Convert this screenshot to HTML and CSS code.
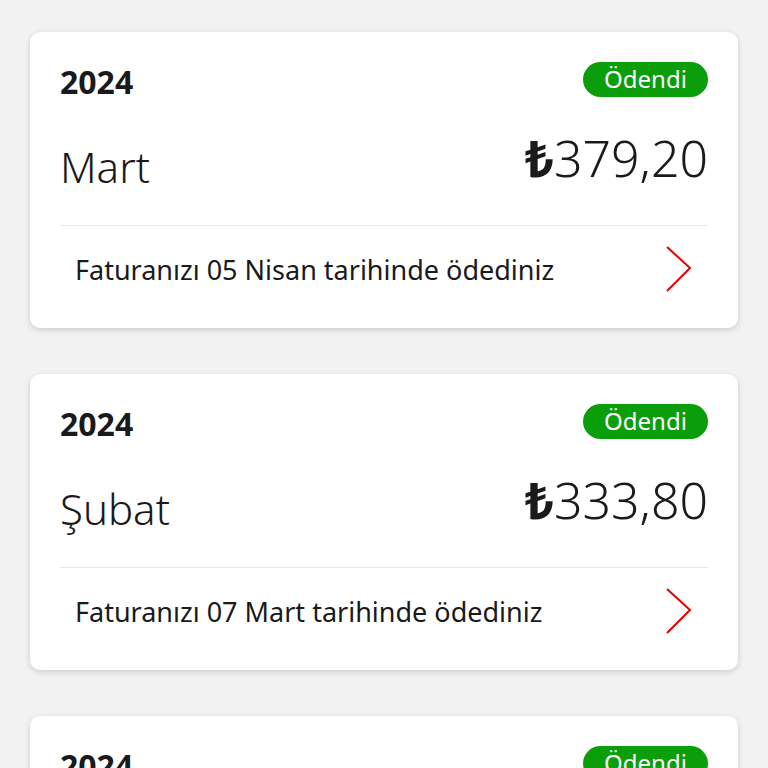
FILE: index.html
```html
<!DOCTYPE html>
<html lang="tr">
<head>
    <meta charset="UTF-8">
    <meta name="viewport" content="width=device-width, initial-scale=1.0">
    <title>Faturalarım</title>
    <link rel="stylesheet" href="styles.css">
</head>
<body>
    <div class="list">
        <!-- Mart faturası -->
        <div class="card">
            <div class="card-head">
                <span class="year">2024</span>
                <span class="badge">Ödendi</span>
            </div>
            <div class="card-main">
                <span class="month">Mart</span>
                <span class="amount"><b>₺</b>379,20</span>
            </div>
            <div class="card-foot">
                <span class="note">Faturanızı 05 Nisan tarihinde ödediniz</span>
                <svg class="chevron" width="26" height="46" viewBox="0 0 26 46">
                    <path d="M1 1 L24 22 L1 45" fill="none" stroke="#e60000" stroke-width="2"/>
                </svg>
            </div>
        </div>

        <!-- Şubat faturası -->
        <div class="card">
            <div class="card-head">
                <span class="year">2024</span>
                <span class="badge">Ödendi</span>
            </div>
            <div class="card-main">
                <span class="month">Şubat</span>
                <span class="amount"><b>₺</b>333,80</span>
            </div>
            <div class="card-foot">
                <span class="note">Faturanızı 07 Mart tarihinde ödediniz</span>
                <svg class="chevron" width="26" height="46" viewBox="0 0 26 46">
                    <path d="M1 1 L24 22 L1 45" fill="none" stroke="#e60000" stroke-width="2"/>
                </svg>
            </div>
        </div>

        <!-- Ocak faturası -->
        <div class="card">
            <div class="card-head">
                <span class="year">2024</span>
                <span class="badge">Ödendi</span>
            </div>
            <div class="card-main">
                <span class="month">Ocak</span>
                <span class="amount"><b>₺</b>301,40</span>
            </div>
            <div class="card-foot">
                <span class="note">Faturanızı 06 Şubat tarihinde ödediniz</span>
                <svg class="chevron" width="26" height="46" viewBox="0 0 26 46">
                    <path d="M1 1 L24 22 L1 45" fill="none" stroke="#e60000" stroke-width="2"/>
                </svg>
            </div>
        </div>
    </div>
</body>
</html>
```

FILE: styles.css
```css
body {
    margin: 0;
    background-color: #f2f2f2;
    font-family: "Noto Sans", Arial, sans-serif;
    color: #1a1a1a;
}
.list {
    padding: 32px 30px;
}
.card {
    background-color: #fff;
    border-radius: 10px;
    box-shadow: 0 2px 6px rgba(0, 0, 0, 0.16);
    margin-bottom: 46px;
    height: 296px;
    box-sizing: border-box;
}
.card-head {
    display: flex;
    justify-content: space-between;
    align-items: center;
    padding: 30px 30px 0;
    height: 35px;
    box-sizing: content-box;
}
.year {
    font-size: 32px;
    font-weight: 700;
    line-height: 35px;
    margin-top: 4px;
}
.badge {
    background-color: #0a9e0a;
    color: #fff;
    border-radius: 18px;
    height: 35px;
    width: 125px;
    text-align: center;
    font-size: 24px;
    line-height: 33px;
    box-sizing: border-box;
}
.card-main {
    display: flex;
    justify-content: space-between;
    align-items: flex-start;
    height: 128px;
    border-bottom: 1px solid #e6e6e6;
    margin: 0 30px;
}
.month {
    font-size: 42px;
    font-weight: 300;
    margin-top: 40px;
    line-height: 60px;
}
.amount {
    font-size: 50px;
    font-weight: 300;
    margin-top: 28px;
    line-height: 66px;
}
.amount b {
    font-weight: 700;
}
.card-foot {
    display: flex;
    justify-content: space-between;
    align-items: center;
    padding: 0 45px 14px;
    height: 100px;
    box-sizing: border-box;
}
.note {
    font-size: 27px;
}
.chevron {
    display: block;
    margin-right: 1px;
}
```
